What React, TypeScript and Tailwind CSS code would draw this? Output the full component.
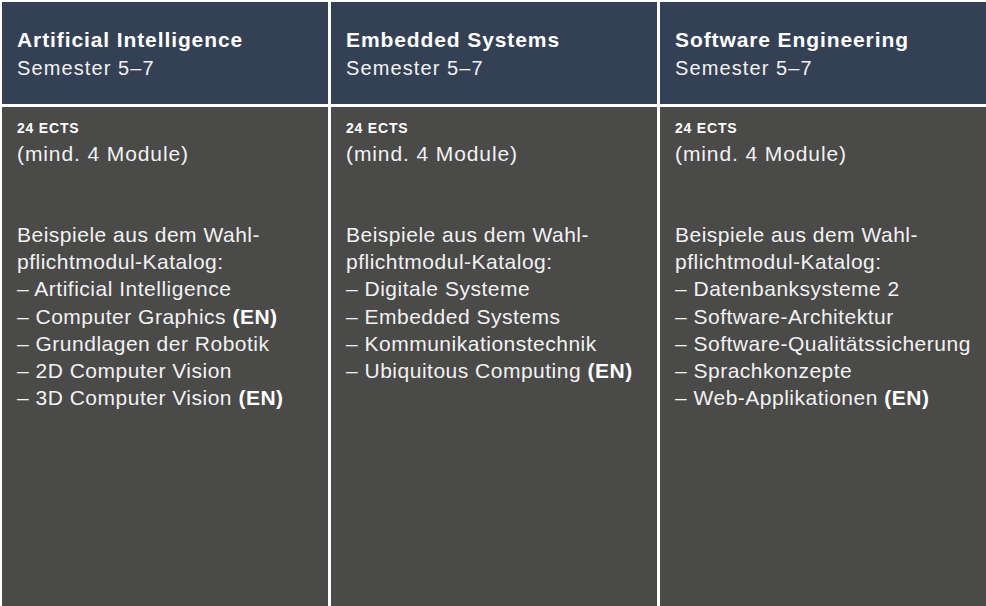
const columns = [
  {
    title: "Artificial Intelligence",
    items: [
      { name: "Artificial Intelligence" },
      { name: "Computer Graphics", en: true },
      { name: "Grundlagen der Robotik" },
      { name: "2D Computer Vision" },
      { name: "3D Computer Vision", en: true },
    ],
  },
  {
    title: "Embedded Systems",
    items: [
      { name: "Digitale Systeme" },
      { name: "Embedded Systems" },
      { name: "Kommunikationstechnik" },
      { name: "Ubiquitous Computing", en: true },
    ],
  },
  {
    title: "Software Engineering",
    items: [
      { name: "Datenbanksysteme 2" },
      { name: "Software-Architektur" },
      { name: "Software-Qualitätssicherung" },
      { name: "Sprachkonzepte" },
      { name: "Web-Applikationen", en: true },
    ],
  },
];

const App = () => {
  return (
    <div className="w-[986px] h-[606px] bg-white pt-[2px] pl-[2px] flex gap-[3px] overflow-hidden font-['Liberation_Sans',Arial,sans-serif] text-white">
      {columns.map((col, index) => (
        <div className="w-[326px] flex flex-col gap-[3px]" key={index}>
          <div className="h-[102px] bg-[#344154] px-[15px] pt-[24px]">
            <h2 className="text-[21px] leading-[28px] font-bold tracking-[0.9px]">
              {col.title}
            </h2>
            <p className="text-[20px] leading-[28px] tracking-[1.1px] text-[#f2f2f2]">
              Semester 5–7
            </p>
          </div>
          <div className="flex-1 bg-[#4a4a48] pl-[15px] pr-[4px] pt-[12px] text-[#f2f2f2]">
            <p className="text-[14px] leading-[18px] font-bold tracking-[0.8px] text-white">
              24 ECTS
            </p>
            <p className="mt-[3px] text-[21px] leading-[27px] tracking-[0.9px]">
              (mind. 4 Module)
            </p>
            <div className="mt-[54px] text-[21px] leading-[27.2px] tracking-[0.5px]">
              <p>Beispiele aus dem Wahl-</p>
              <p>pflichtmodul-Katalog:</p>
              <ul>
                {col.items.map((item, i) => (
                  <li className="whitespace-nowrap" key={i}>
                    – {item.name}
                    {item.en && (
                      <span className="font-bold text-white"> (EN)</span>
                    )}
                  </li>
                ))}
              </ul>
            </div>
          </div>
        </div>
      ))}
    </div>
  );
};

export default App;
